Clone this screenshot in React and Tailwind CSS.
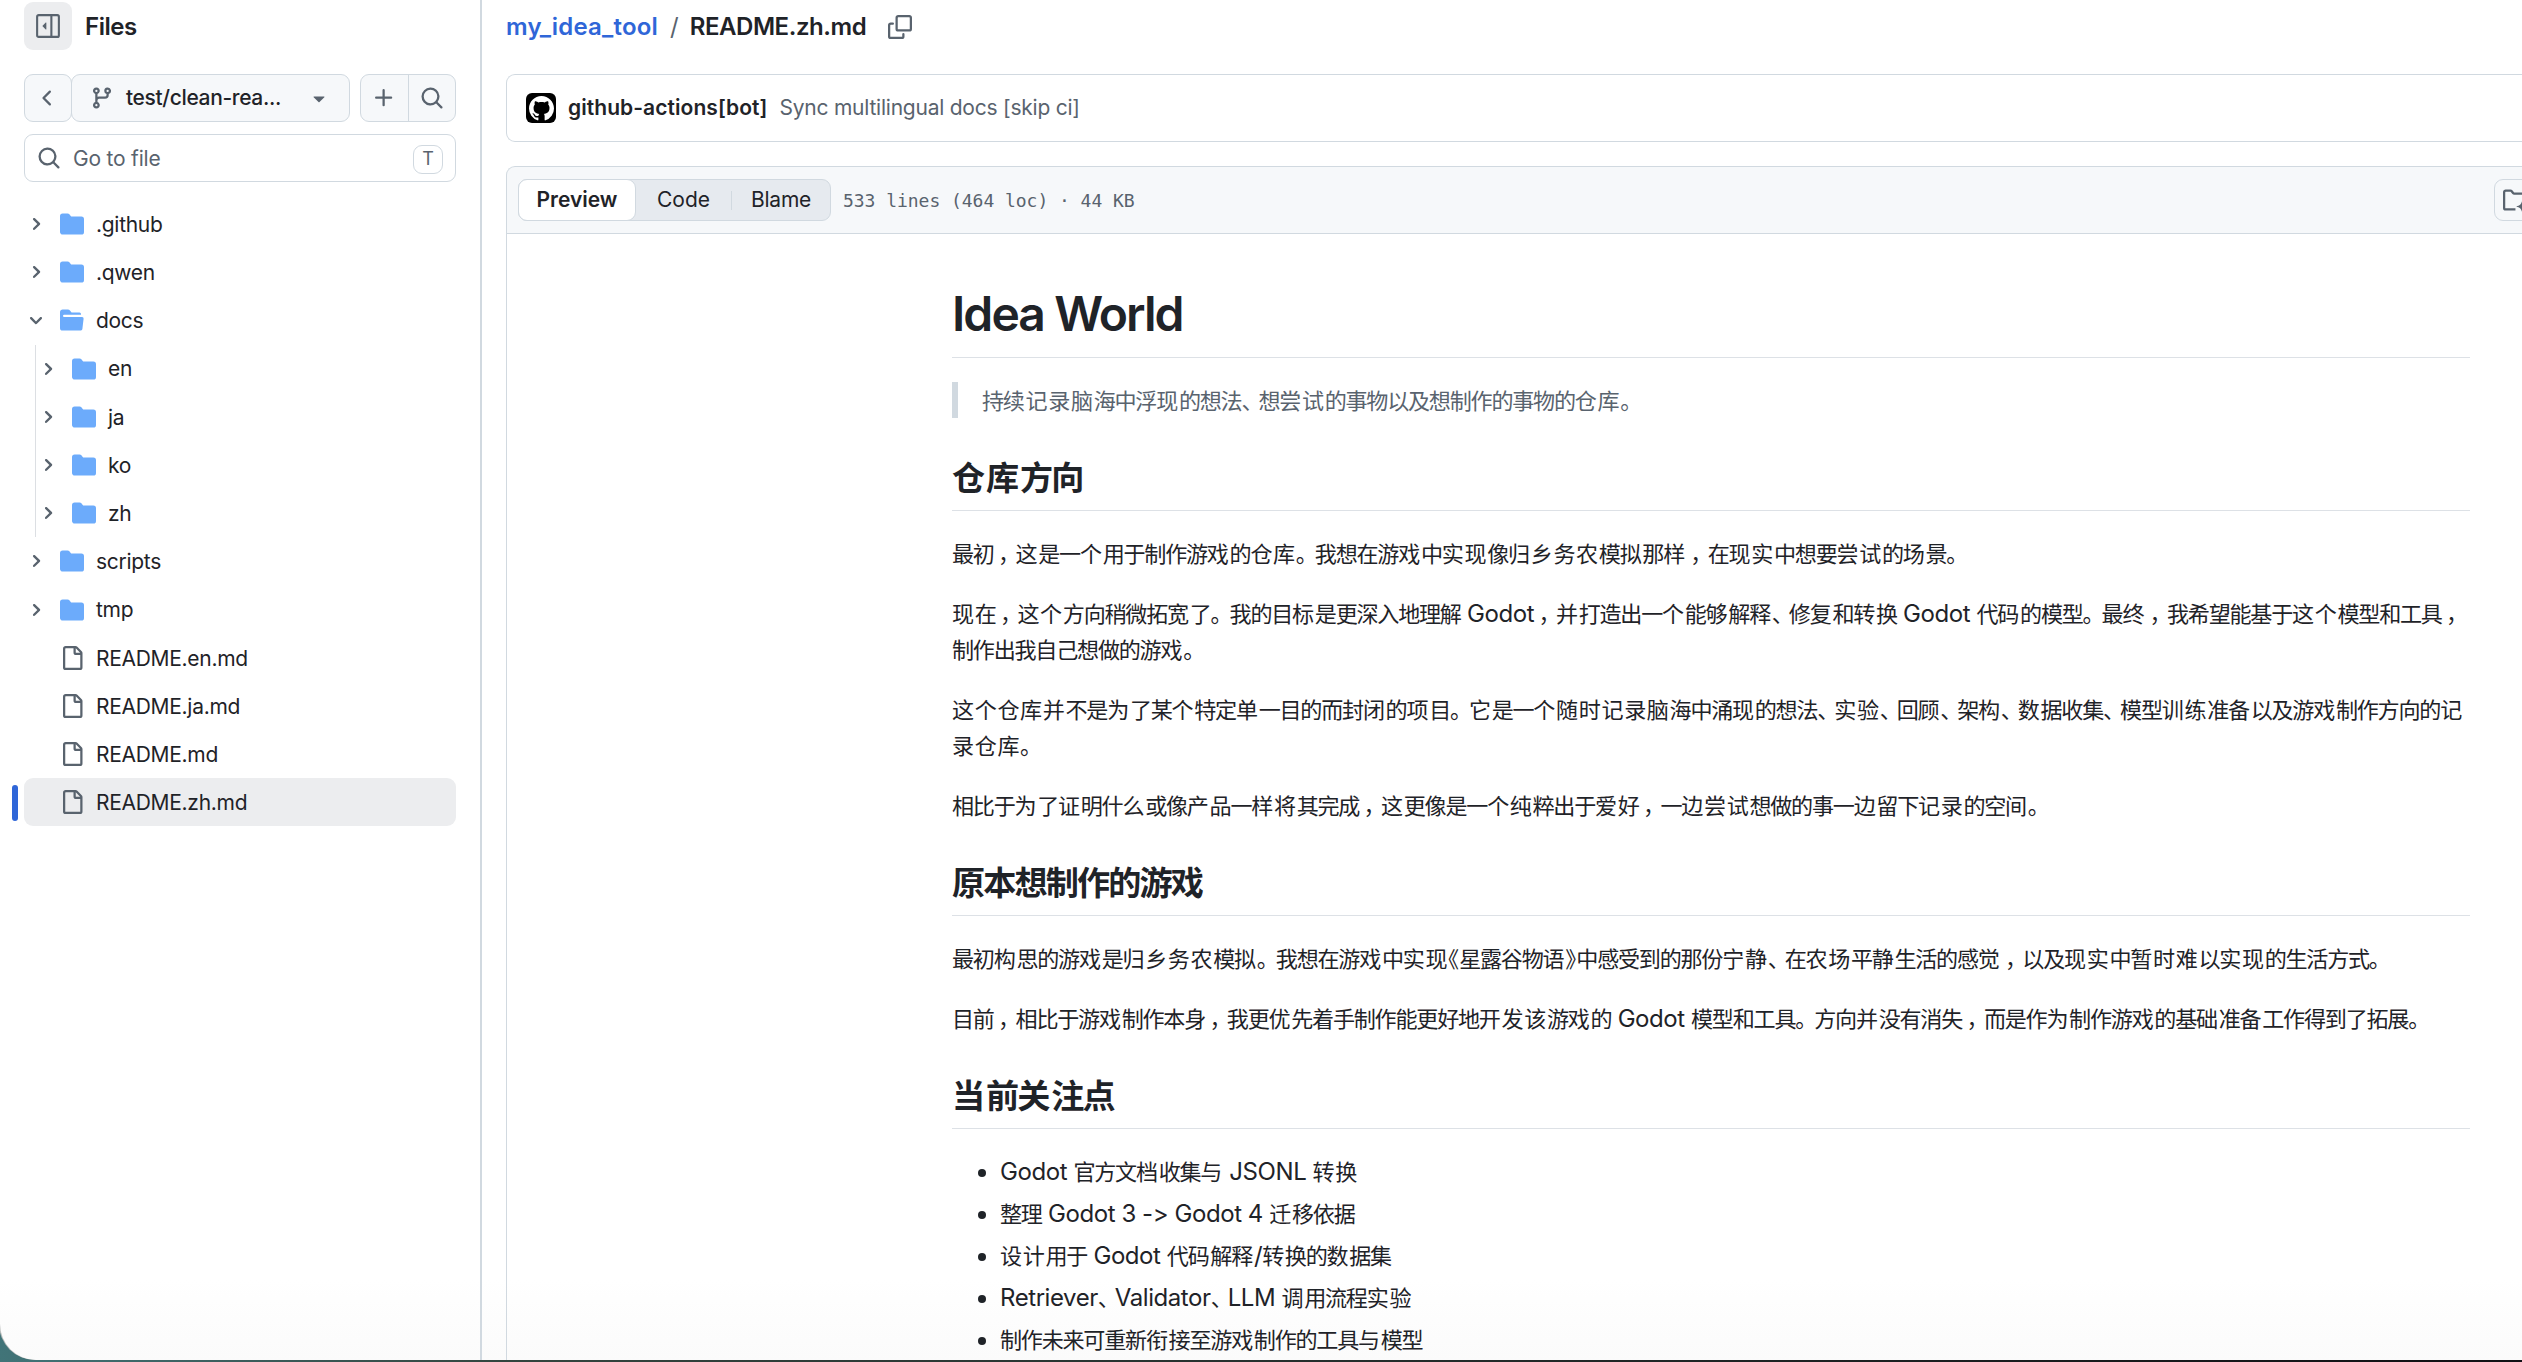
// ── Icons ────────────────────────────────────────────────────────────────────
const ICONS = {
  search:
    "M10.68 11.74a6 6 0 0 1-7.922-8.982 6 6 0 0 1 8.982 7.922l3.04 3.04a.749.749 0 0 1-.326 1.275.749.749 0 0 1-.734-.215ZM11.5 7a4.499 4.499 0 1 0-8.997 0A4.499 4.499 0 0 0 11.5 7Z",
  plus: "M7.75 2a.75.75 0 0 1 .75.75V7h4.25a.75.75 0 0 1 0 1.5H8.5v4.25a.75.75 0 0 1-1.5 0V8.5H2.75a.75.75 0 0 1 0-1.5H7V2.75A.75.75 0 0 1 7.75 2Z",
  branch:
    "M9.5 3.25a2.25 2.25 0 1 1 3 2.122V6A2.5 2.5 0 0 1 10 8.5H6a1 1 0 0 0-1 1v1.128a2.251 2.251 0 1 1-1.5 0V5.372a2.25 2.25 0 1 1 1.5 0v1.836A2.493 2.493 0 0 1 6 7h4a1 1 0 0 0 1-1v-.628A2.25 2.25 0 0 1 9.5 3.25Zm-6 0a.75.75 0 1 0 1.5 0 .75.75 0 0 0-1.5 0Zm8.25-.75a.75.75 0 1 0 0 1.5.75.75 0 0 0 0-1.5ZM4.25 12a.75.75 0 1 0 0 1.5.75.75 0 0 0 0-1.5Z",
  triangleDown:
    "m4.427 7.427 3.396 3.396a.25.25 0 0 0 .354 0l3.396-3.396A.25.25 0 0 0 11.396 7H4.604a.25.25 0 0 0-.177.427Z",
  chevronLeft:
    "M9.78 12.78a.75.75 0 0 1-1.06 0L4.47 8.53a.75.75 0 0 1 0-1.06l4.25-4.25a.751.751 0 0 1 1.042.018.751.751 0 0 1 .018 1.042L6.06 8l3.72 3.72a.75.75 0 0 1 0 1.06Z",
  file: "M2 1.75C2 .784 2.784 0 3.75 0h6.586c.464 0 .909.184 1.237.513l2.914 2.914c.329.328.513.773.513 1.237v9.586A1.75 1.75 0 0 1 13.25 16h-9.5A1.75 1.75 0 0 1 2 14.25Zm1.75-.25a.25.25 0 0 0-.25.25v12.5c0 .138.112.25.25.25h9.5a.25.25 0 0 0 .25-.25V6h-2.75A1.75 1.75 0 0 1 9 4.25V1.5Zm6.75.062V4.25c0 .138.112.25.25.25h2.688l-.011-.013-2.914-2.914-.013-.011Z",
  copy: "M0 6.75C0 5.784.784 5 1.75 5h1.5a.75.75 0 0 1 0 1.5h-1.5a.25.25 0 0 0-.25.25v7.5c0 .138.112.25.25.25h7.5a.25.25 0 0 0 .25-.25v-1.5a.75.75 0 0 1 1.5 0v1.5A1.75 1.75 0 0 1 9.25 16h-7.5A1.75 1.75 0 0 1 0 14.25ZM5 1.75C5 .784 5.784 0 6.75 0h7.5C15.216 0 16 .784 16 1.75v7.5A1.75 1.75 0 0 1 14.25 11h-7.5A1.75 1.75 0 0 1 5 9.25Zm1.75-.25a.25.25 0 0 0-.25.25v7.5c0 .138.112.25.25.25h7.5a.25.25 0 0 0 .25-.25v-7.5a.25.25 0 0 0-.25-.25Z",
  github:
    "M8 0c4.42 0 8 3.58 8 8a8.013 8.013 0 0 1-5.45 7.59c-.4.08-.55-.17-.55-.38 0-.27.01-1.13.01-2.2 0-.75-.25-1.23-.54-1.48 1.78-.2 3.65-.88 3.65-3.95 0-.88-.31-1.59-.82-2.15.08-.2.36-1.02-.08-2.12 0 0-.67-.22-2.2.82-.64-.18-1.32-.27-2-.27-.68 0-1.36.09-2 .27-1.53-1.03-2.2-.82-2.2-.82-.44 1.1-.16 1.92-.08 2.12-.51.56-.82 1.28-.82 2.15 0 3.06 1.86 3.75 3.64 3.95-.23.2-.44.55-.51 1.07-.46.21-1.61.55-2.33-.66-.15-.24-.6-.83-1.23-.82-.67.01-.27.38.01.53.34.19.73.9.82 1.13.16.45.68 1.31 2.69.94 0 .67.01 1.3.01 1.49 0 .21-.15.45-.55.38A7.995 7.995 0 0 1 0 8c0-4.42 3.58-8 8-8Z",
  folder:
    "M1.75 1A1.75 1.75 0 0 0 0 2.75v10.5C0 14.216.784 15 1.75 15h12.5A1.75 1.75 0 0 0 16 13.25v-8.5A1.75 1.75 0 0 0 14.25 3H7.5a.25.25 0 0 1-.2-.1l-.9-1.2C6.07 1.26 5.55 1 5 1H1.75Z",
  folderOpen:
    "M.513 1.513A1.75 1.75 0 0 1 1.75 1h3.5c.55 0 1.07.26 1.4.7l.9 1.2a.25.25 0 0 0 .2.1H13a1 1 0 0 1 1 1v.5H2.75a.75.75 0 0 0 0 1.5h11.978a1 1 0 0 1 .994 1.117L15 13.25A1.75 1.75 0 0 1 13.25 15H1.75A1.75 1.75 0 0 1 0 13.25V2.75c0-.464.184-.91.513-1.237Z",
};

const Icon = ({ name, className = "h-6 w-6 fill-[#59636e]" }) => (
  <svg viewBox="0 0 16 16" className={`shrink-0 ${className}`}>
    <path d={ICONS[name]} />
  </svg>
);

// Small tree chevron, drawn on a 12px grid
const Chevron = ({ open }) => (
  <svg viewBox="0 0 12 12" className="h-[18px] w-[18px] fill-[#59636e]">
    {open ? (
      <path d="M6 8.825c-.2 0-.4-.1-.5-.2l-3.3-3.3c-.3-.3-.3-.8 0-1.1.3-.3.8-.3 1.1 0l2.7 2.7 2.7-2.7c.3-.3.8-.3 1.1 0 .3.3.3.8 0 1.1l-3.2 3.2c-.2.2-.4.3-.6.3Z" />
    ) : (
      <path d="M4.7 10c-.2 0-.4-.1-.5-.2-.3-.3-.3-.8 0-1.1L6.9 6 4.2 3.3c-.3-.3-.3-.8 0-1.1.3-.3.8-.3 1.1 0l3.3 3.2c.3.3.3.8 0 1.1L5.3 9.7c-.2.2-.4.3-.6.3Z" />
    )}
  </svg>
);

const SidebarIcon = () => (
  <svg viewBox="0 0 16 16" className="h-6 w-6 fill-none stroke-[#59636e] stroke-[1.4]">
    <rect x="0.75" y="0.75" width="14.5" height="14.5" rx="1" />
    <path d="M10.25 1v14" />
    <path className="fill-[#59636e] stroke-none" d="M6.9 5.9v4.2a.25.25 0 0 1-.43.18L4.38 8.18a.25.25 0 0 1 0-.36l2.09-2.1a.25.25 0 0 1 .43.18Z" />
  </svg>
);

// ── Text helpers ─────────────────────────────────────────────────────────────
const WIDE =
  "续记脑现尝试仓库这戏实归乡务农拟样场宽标为单闭项随时验顾构数训练备录证么产纯爱边间语难觉个并够释复转优终码设计档与调迁衔当关它宁静础开发该暂将";

const kindOf = (ch) => {
  if (ch === "，") return "comma";
  if (ch === "、") return "pause";
  if (ch === "。") return "stop";
  if ("《》".includes(ch)) return "bracket";
  if (ch.charCodeAt(0) < 0x2e80) return "latin";
  return WIDE.includes(ch) ? "wide" : "hanja";
};

const splitRuns = (text) => {
  const runs = [];
  for (const ch of text) {
    const kind = kindOf(ch);
    const last = runs[runs.length - 1];
    if (last && last.kind === kind) last.text += ch;
    else runs.push({ kind, text: ch });
  }
  return runs;
};

const RUN_CLASS = {
  latin: "tracking-[-0.018em]",
  wide: "text-[0.92em] tracking-[0.028em]",
  hanja: "text-[0.92em] tracking-[-0.056em]",
  pause: "text-[0.92em] tracking-[-0.23em]",
  stop: "text-[0.92em] tracking-[-0.14em]",
  bracket: "text-[0.92em] [font-feature-settings:'halt']",
  comma: "text-[0.92em] pl-[0.2em] tracking-[-0.21em]",
};

const Zh = ({ children }) =>
  splitRuns(children).map((run, i) => (
    <span key={i} className={RUN_CLASS[run.kind]}>
      {run.text}
    </span>
  ));

// ── Sidebar ──────────────────────────────────────────────────────────────────
const TREE = [
  { name: ".github", type: "dir" },
  { name: ".qwen", type: "dir" },
  { name: "docs", type: "dir", open: true },
  { name: "en", type: "dir", nested: true },
  { name: "ja", type: "dir", nested: true },
  { name: "ko", type: "dir", nested: true },
  { name: "zh", type: "dir", nested: true },
  { name: "scripts", type: "dir" },
  { name: "tmp", type: "dir" },
  { name: "README.en.md", type: "file" },
  { name: "README.ja.md", type: "file" },
  { name: "README.md", type: "file" },
  { name: "README.zh.md", type: "file", active: true },
];

const TreeRow = ({ name, type, open, nested, active }) => (
  <li className={`relative flex h-[48.2px] items-center rounded-[9px] ${active ? "bg-[#ecedef]" : ""}`}>
    {active && <span className="absolute top-[7px] -left-3 h-9 w-1.5 rounded-full bg-[#2f66d8]" />}
    {nested && <span className="ml-[11px] h-full w-px bg-[#dcdfe3]" />}
    <span className="flex w-6 justify-center">{type === "dir" && <Chevron open={open} />}</span>
    <span className="ml-3 w-6">
      {type === "dir" ? (
        <Icon name={open ? "folderOpen" : "folder"} className="h-6 w-6 fill-[#6cabfb]" />
      ) : (
        <Icon name="file" />
      )}
    </span>
    <span className="ml-3 pt-px text-[21px] tracking-[-0.014em]">{name}</span>
  </li>
);

const Sidebar = () => (
  <aside className="w-[482px] shrink-0 border-r-2 border-[#d1d9e0] pt-0.5 pr-6 pl-6">
    <div className="flex items-center gap-[13px]">
      <span className="flex h-12 w-12 items-center justify-center rounded-[9px] bg-[#ecedef]">
        <SidebarIcon />
      </span>
      <h2 className="pt-0.5 text-2xl font-semibold tracking-[-0.02em]">Files</h2>
    </div>

    <div className="mt-6 flex h-12">
      <span className="flex w-12 items-center justify-center rounded-[9px] border border-[#d1d9e0] bg-[#f6f8fa]">
        <Icon name="chevronLeft" />
      </span>
      <span className="-ml-px flex w-[279px] items-center rounded-[9px] border border-[#d1d9e0] bg-[#f6f8fa] px-[18px]">
        <Icon name="branch" />
        <span className="ml-3 flex-1 text-[21px] font-medium tracking-[-0.017em]">test/clean-rea...</span>
        <Icon name="triangleDown" />
      </span>
      <span className="ml-2.5 flex w-24 rounded-[9px] border border-[#d1d9e0] bg-[#f6f8fa]">
        <span className="flex flex-1 items-center justify-center border-r border-[#d1d9e0]">
          <Icon name="plus" />
        </span>
        <span className="flex flex-1 items-center justify-center">
          <Icon name="search" />
        </span>
      </span>
    </div>

    <div className="mt-3 flex h-12 items-center rounded-[9px] border border-[#d1d9e0] px-3 text-[#59636e]">
      <Icon name="search" />
      <span className="ml-3 flex-1 pt-0.5 text-[21px] tracking-[-0.01em]">Go to file</span>
      <kbd className="mt-0.5 flex h-[29px] w-[30px] items-center justify-center rounded-[9px] border border-[#d1d9e0] font-[Inter,sans-serif] text-lg">
        T
      </kbd>
    </div>

    <ul className="mt-[18px]">
      {TREE.map((item) => (
        <TreeRow key={item.name} {...item} />
      ))}
    </ul>
  </aside>
);

// ── File header ──────────────────────────────────────────────────────────────
const Breadcrumb = () => (
  <div className="flex h-[50px] items-center pt-[3px] text-2xl font-semibold">
    <span className="tracking-[0.008em] text-[#2f66d8]">my_idea_tool</span>
    <span className="mr-[11px] ml-3 font-normal text-[#59636e]">/</span>
    <span className="tracking-[-0.018em]">README.zh.md</span>
    <Icon name="copy" className="ml-[22px] h-6 w-6 fill-[#59636e]" />
  </div>
);

const CommitBar = () => (
  <div className="mt-6 flex h-[68px] items-center rounded-l-[9px] border border-r-0 border-[#d1d9e0] pl-[19px] text-[21px]">
    <span className="flex h-[30px] w-[30px] items-center justify-center rounded-[6px] bg-black">
      <Icon name="github" className="h-[25px] w-[25px] fill-white" />
    </span>
    <span className="ml-3 font-semibold tracking-[0.003em]">github-actions[bot]</span>
    <span className="ml-3 tracking-[-0.011em] text-[#59636e]">Sync multilingual docs [skip ci]</span>
  </div>
);

const FileToolbar = () => (
  <div className="flex h-[68px] items-center rounded-tl-[9px] border-y border-l border-[#d1d9e0] bg-[#f6f8fa] pl-[11px]">
    <div className="flex h-[42px] w-[313px] items-center rounded-[9px] border border-[#d1d9e0] bg-[#e6eaef] text-[21px]">
      <span className="-my-px -ml-px flex h-[42px] w-[118px] items-center justify-center rounded-[9px] border border-[#d1d9e0] bg-white font-semibold">
        Preview
      </span>
      <span className="w-[95px] text-center">Code</span>
      <span className="h-[19px] w-px bg-[#d1d9e0]" />
      <span className="flex-1 text-center tracking-[-0.01em]">Blame</span>
    </div>
    <span className="ml-3 pt-0.5 font-['DejaVu_Sans_Mono',monospace] text-lg tracking-[-0.002em] text-[#59636e]">
      533 lines (464 loc) · 44 KB
    </span>
    <span className="-mr-5 ml-auto flex h-[42px] w-12 shrink-0 items-center rounded-[9px] border border-[#d1d9e0] pl-2">
      <svg viewBox="0 0 16 16" className="h-6 w-6 shrink-0 fill-none stroke-[#59636e] stroke-[1.5]">
        <path d="M8.3 14.25H1.75a1 1 0 0 1-1-1V2.75a1 1 0 0 1 1-1H5a1 1 0 0 1 .8.4l.9 1.2a1 1 0 0 0 .8.4h8.5" />
        <path
          className="fill-[#59636e] stroke-none"
          d="M12.8 8.4c.6 2.5 1.4 3.300 4 4-2.600.7-3.400 1.500-4 4-.6-2.500-1.400-3.300-4-4 2.600-.7 3.400-1.500 4-4Z"
        />
      </svg>
    </span>
  </div>
);

// ── README body ──────────────────────────────────────────────────────────────
const Heading = ({ children }) => (
  <h2 className="mt-9 mb-6 h-[57px] border-b border-[#dde1e6] text-4xl leading-[46px] font-bold">
    <Zh>{children}</Zh>
  </h2>
);

const Paragraph = ({ lines }) => (
  <p className="mb-6">
    {lines.map((line) => (
      <span key={line} className="block h-9 whitespace-nowrap">
        <Zh>{line}</Zh>
      </span>
    ))}
  </p>
);

const FOCUS = [
  "Godot 官方文档收集与 JSONL 转换",
  "整理 Godot 3 -> Godot 4 迁移依据",
  "设计用于 Godot 代码解释/转换的数据集",
  "Retriever、Validator、LLM 调用流程实验",
  "制作未来可重新衔接至游戏制作的工具与模型",
];

const Readme = () => (
  <article className="ml-[445px] w-[1518px] pt-12 text-2xl leading-[37px]">
    <h1 className="mb-6 h-[76px] border-b border-[#dde1e6] text-5xl leading-[64px] font-semibold tracking-[-0.04em]">
      Idea World
    </h1>
    <blockquote className="h-9 border-l-6 border-[#d1d9e0] pl-6 text-[#59636e]">
      <Zh>持续记录脑海中浮现的想法、想尝试的事物以及想制作的事物的仓库。</Zh>
    </blockquote>

    <Heading>仓库方向</Heading>
    <Paragraph lines={["最初，这是一个用于制作游戏的仓库。我想在游戏中实现像归乡务农模拟那样，在现实中想要尝试的场景。"]} />
    <Paragraph
      lines={[
        "现在，这个方向稍微拓宽了。我的目标是更深入地理解 Godot，并打造出一个能够解释、修复和转换 Godot 代码的模型。最终，我希望能基于这个模型和工具，",
        "制作出我自己想做的游戏。",
      ]}
    />
    <Paragraph
      lines={[
        "这个仓库并不是为了某个特定单一目的而封闭的项目。它是一个随时记录脑海中涌现的想法、实验、回顾、架构、数据收集、模型训练准备以及游戏制作方向的记",
        "录仓库。",
      ]}
    />
    <Paragraph lines={["相比于为了证明什么或像产品一样将其完成，这更像是一个纯粹出于爱好，一边尝试想做的事一边留下记录的空间。"]} />

    <Heading>原本想制作的游戏</Heading>
    <Paragraph lines={["最初构思的游戏是归乡务农模拟。我想在游戏中实现《星露谷物语》中感受到的那份宁静、在农场平静生活的感觉，以及现实中暂时难以实现的生活方式。"]} />
    <Paragraph lines={["目前，相比于游戏制作本身，我更优先着手制作能更好地开发该游戏的 Godot 模型和工具。方向并没有消失，而是作为制作游戏的基础准备工作得到了拓展。"]} />

    <Heading>当前关注点</Heading>
    <ul className="list-disc space-y-1.5 pl-12">
      {FOCUS.map((item) => (
        <li key={item} className="h-9">
          <Zh>{item}</Zh>
        </li>
      ))}
    </ul>
  </article>
);

export default function App() {
  return (
    <div className="h-[1362px] w-[2522px] overflow-hidden bg-linear-to-r from-[#417478] via-[#33453f] via-20% to-[#101014] pb-0.5 font-[Inter,'Noto_Sans_CJK_SC',sans-serif] text-[#1f2328]">
      <div className="flex h-[1360px] overflow-hidden rounded-bl-[36px] bg-white bg-linear-to-b from-white from-94% to-[#fbfbfb] shadow-[-1px_0_0_0_#b5b9b8]">
        <Sidebar />
        <main className="min-w-0 flex-1 overflow-hidden pl-6">
          <Breadcrumb />
          <CommitBar />
          <div className="mt-6">
            <FileToolbar />
            <div className="h-[1130px] border-l border-[#d1d9e0]">
              <Readme />
            </div>
          </div>
        </main>
      </div>
    </div>
  );
}
